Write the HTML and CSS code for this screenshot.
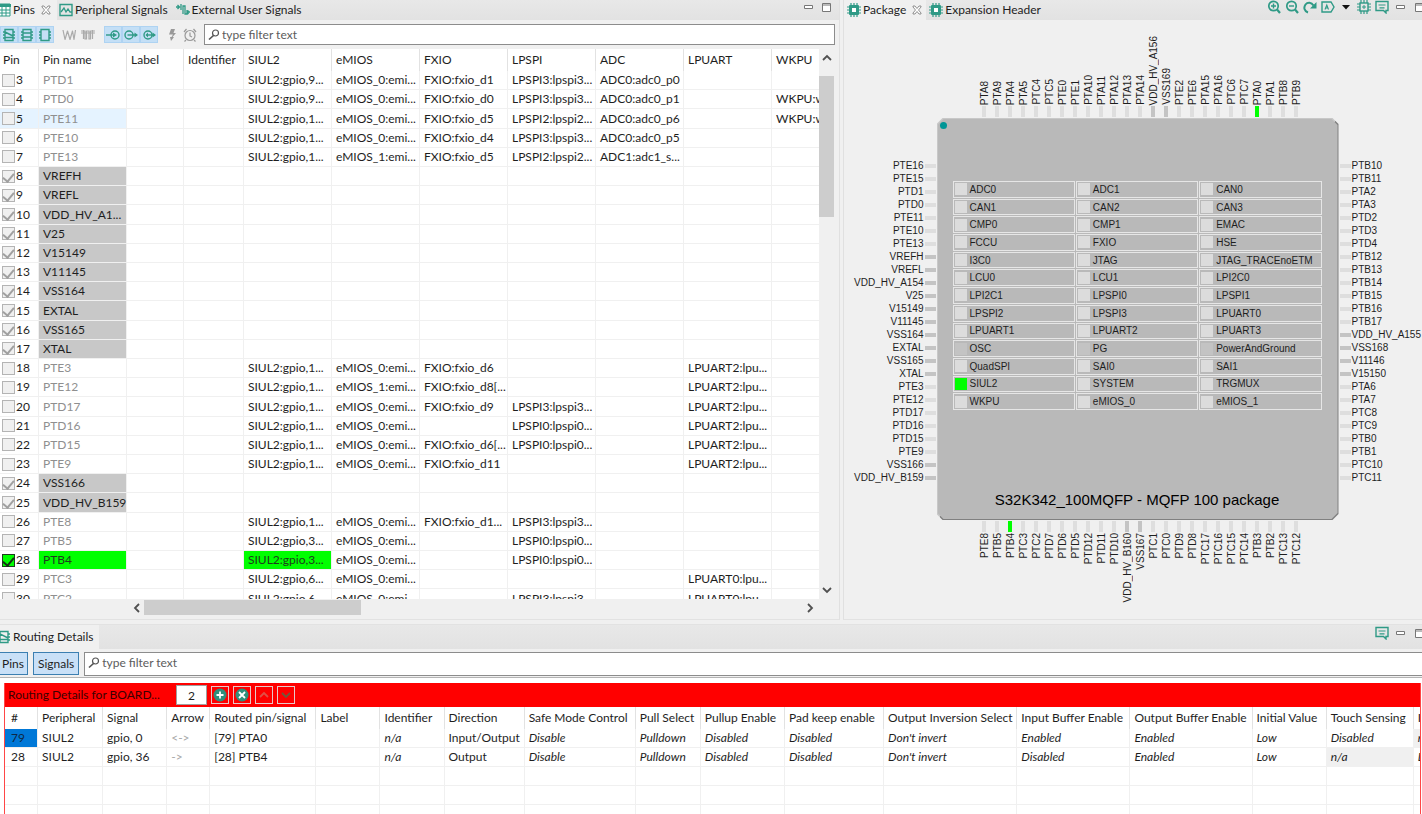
FILE: index.html
```html
<!DOCTYPE html>
<html lang="en">
<head>
    <meta charset="UTF-8">
    <meta name="viewport" content="width=device-width, initial-scale=1.0">
    <title>Pins Tool</title>
    <link rel="stylesheet" href="styles.css">
</head>
<body>
    <svg class="sprite" aria-hidden="true">
        <symbol id="i-table" viewBox="0 0 14 14"><path d="M1 1h12v12H1z" fill="#fff"/><path d="M0 1h14v3H0z" fill="#2f9a86"/><path d="M1 1h12v12H1zM1 7h12M1 10h12M5 3v10M9 3v10" fill="none" stroke="#2f9a86"/></symbol>
        <symbol id="i-wave" viewBox="0 0 14 14"><path d="M1 1.5h12v11H1z" fill="none" stroke="#2f9a86" stroke-width="1.4"/><path d="M2 9l3-4 2 4 2-3 2 3h2" fill="none" stroke="#2f9a86" stroke-width="1.3"/></symbol>
        <symbol id="i-ext" viewBox="0 0 14 14"><path d="M0 4h3.500M1.500 2l2 2-2 2M5 1v6M7 11V3h2v8h2V7M11 9h3M12.500 7.500L11 9l1.500 2" fill="none" stroke="#2f9a86" stroke-width="1.3"/></symbol>
        <symbol id="i-chip" viewBox="0 0 14 14"><path d="M4 0v14M7 0v14M10 0v14M0 4h14M0 7h14M0 10h14" stroke="#2f9a86" stroke-width="1.2"/><rect x="2" y="2" width="10" height="10" rx="1" fill="#2f9a86"/><rect x="5" y="5" width="4" height="4" fill="#fff"/></symbol>
        <symbol id="i-close" viewBox="0 0 10 10"><path d="M1 1h2l2 2.500L7 1h2v1L6.500 5 9 8v1H7L5 6.500 3 9H1V8l2.500-3L1 2z" fill="#fff" stroke="#777" stroke-width=".8"/></symbol>
        <symbol id="i-route" viewBox="0 0 14 14"><path d="M3 1.500h8v11H3zM1 4h2M1 7h2M1 10h2M11 4h2M11 7h2M11 10h2M3 4l8 4M3 9.500h8" fill="none" stroke="#2f9a86" stroke-width="1.400"/></symbol>
        <symbol id="i-rows" viewBox="0 0 14 14"><path d="M3 1.500h8v11H3zM1 4h2M1 7h2M1 10h2M11 4h2M11 7h2M11 10h2M3 5h8M3 9h8" fill="none" stroke="#2f9a86" stroke-width="1.400"/></symbol>
        <symbol id="i-box" viewBox="0 0 14 14"><path d="M3 1.500h8v11H3zM1 4h2M1 7h2M1 10h2M11 4h2M11 7h2M11 10h2" fill="none" stroke="#2f9a86" stroke-width="1.400"/></symbol>
        <symbol id="i-sine" viewBox="0 0 14 14"><path d="M1 2l2 9.500L5.500 3 8 11.500 10.500 3l1.500 8.500L13.500 2" fill="none" stroke="#aaa" stroke-width="1.200" stroke-linejoin="round"/></symbol>
        <symbol id="i-square" viewBox="0 0 14 14"><path d="M0 3h4v8h1.500V3H8v8h1.500V3H14M2.500 2v9M11.500 2v9M0 5h14" fill="none" stroke="#aaa" stroke-width="1.200"/></symbol>
        <symbol id="i-in" viewBox="0 0 14 14"><circle cx="9" cy="7" r="4" fill="none" stroke="#2f9a86" stroke-width="1.400"/><path d="M0 7h8" stroke="#2f9a86" stroke-width="1.400"/><path d="M7 4.500l4 2.500-4 2.500z" fill="#2f9a86"/></symbol>
        <symbol id="i-out" viewBox="0 0 14 14"><circle cx="5" cy="7" r="4" fill="none" stroke="#2f9a86" stroke-width="1.400"/><path d="M3.500 7h9" stroke="#2f9a86" stroke-width="1.400"/><path d="M10.500 4.500l3.500 2.500-3.500 2.500z" fill="#2f9a86"/></symbol>
        <symbol id="i-inout" viewBox="0 0 14 14"><circle cx="6" cy="7" r="4" fill="none" stroke="#2f9a86" stroke-width="1.400"/><path d="M4.500 7h8" stroke="#2f9a86" stroke-width="1.400"/><path d="M6 4.500L3.500 7 6 9.500zM10.500 4.500l3.500 2.500-3.500 2.500z" fill="#2f9a86"/></symbol>
        <symbol id="i-bolt" viewBox="0 0 14 14"><path d="M6 1h4L8.500 5H11l-3.500 4H9l-3 4-1-4h1.500L8 6.500H4z" fill="#999"/></symbol>
        <symbol id="i-clock" viewBox="0 0 14 14"><circle cx="7" cy="7.500" r="5" fill="none" stroke="#999" stroke-width="1.200"/><path d="M7 4.500v3.500l2 1M1 4l2.500-3M13 4l-2.500-3M3 12l-1.500 1.500M11 12l1.500 1.500" fill="none" stroke="#999" stroke-width="1.200"/></symbol>
        <symbol id="i-search" viewBox="0 0 12 12"><circle cx="7.500" cy="4" r="3" fill="none" stroke="#555" stroke-width="1.200"/><path d="M5.500 6.500L1 10.500" stroke="#555" stroke-width="1.600"/></symbol>
        <symbol id="i-min" viewBox="0 0 9 9"><path d="M.5 2.500h8v3h-8z" fill="#fff" stroke="#777"/></symbol>
        <symbol id="i-max" viewBox="0 0 9 9"><path d="M.5.5h8v8h-8z" fill="#fff" stroke="#777"/><path d="M0 2h9" stroke="#777"/></symbol>
        <symbol id="i-zin" viewBox="0 0 14 14"><circle cx="6.500" cy="6" r="4.700" fill="none" stroke="#2f9a86" stroke-width="1.700"/><path d="M10 9.500l3 3.500" stroke="#2f9a86" stroke-width="2.200"/><path d="M4 6h5M6.500 3.500v5" stroke="#2f9a86" stroke-width="1.400"/></symbol>
        <symbol id="i-zout" viewBox="0 0 14 14"><circle cx="6.500" cy="6" r="4.700" fill="none" stroke="#2f9a86" stroke-width="1.700"/><path d="M10 9.500l3 3.500" stroke="#2f9a86" stroke-width="2.200"/><path d="M4 6h5" stroke="#2f9a86" stroke-width="1.400"/></symbol>
        <symbol id="i-rotate" viewBox="0 0 14 14"><path d="M5 12.500C1 11 .5 7.500 2.500 4.500c2-2.500 6-2.500 8 1" fill="none" stroke="#2f9a86" stroke-width="2"/><path d="M13.500 2v6.500H7z" fill="#2f9a86"/></symbol>
        <symbol id="i-tag" viewBox="0 0 14 14"><path d="M1 2h9l3 5-3 5H1z" fill="none" stroke="#2f9a86" stroke-width="1.400"/><path d="M4 9.500L5.800 5l1.700 4.500M4.800 8h2.200" fill="none" stroke="#2f9a86" stroke-width="1.100"/></symbol>
        <symbol id="i-caret" viewBox="0 0 8 8"><path d="M0 2h8L4 6.500z" fill="#111"/></symbol>
        <symbol id="i-chip2" viewBox="0 0 14 14"><path d="M4 0v14M7 0v14M10 0v14M0 4h14M0 7h14M0 10h14" stroke="#2f9a86" stroke-width="1.200"/><rect x="3" y="3" width="8" height="8" fill="#e6e6e6" stroke="#2f9a86" stroke-width="1.400"/><path d="M7 5v4M5 7h4" stroke="#2f9a86"/></symbol>
        <symbol id="i-note" viewBox="0 0 14 14"><path d="M1 1.500h12v9h-2v2.500l-2.500-2.500H1z" fill="none" stroke="#2f9a86" stroke-width="1.400"/><path d="M3.500 5h7M4.500 7.800h5" stroke="#2f9a86" stroke-width="1.200"/></symbol>
        <symbol id="i-add" viewBox="0 0 14 14"><circle cx="7" cy="7" r="6.500" fill="#2f8f7c"/><path d="M7 3.500v7M3.500 7h7" stroke="#fff" stroke-width="1.800"/></symbol>
        <symbol id="i-del" viewBox="0 0 14 14"><circle cx="7" cy="7" r="6.500" fill="#2f8f7c"/><path d="M4 4l6 6M10 4l-6 6" stroke="#fff" stroke-width="1.800"/></symbol>
        <symbol id="i-up" viewBox="0 0 10 10"><path d="M1 7l4-4 4 4" fill="none" stroke="currentColor" stroke-width="1.800"/></symbol>
        <symbol id="i-down" viewBox="0 0 10 10"><path d="M1 3l4 4 4-4" fill="none" stroke="currentColor" stroke-width="1.800"/></symbol>
        <symbol id="i-left" viewBox="0 0 10 10"><path d="M7 1L3 5l4 4" fill="none" stroke="currentColor" stroke-width="1.800"/></symbol>
        <symbol id="i-right" viewBox="0 0 10 10"><path d="M3 1l4 4-4 4" fill="none" stroke="currentColor" stroke-width="1.800"/></symbol>
    </svg>

    <div class="workbench">
        <section class="view pins-view">
            <div class="tabs">
                <button class="tab active"><svg class="icon"><use href="#i-table"/></svg>Pins<svg class="close"><use href="#i-close"/></svg></button>
                <button class="tab"><svg class="icon"><use href="#i-wave"/></svg>Peripheral Signals</button>
                <button class="tab"><svg class="icon"><use href="#i-ext"/></svg>External User Signals</button>
                <div class="tab-tools">
                    <button class="tool" aria-label="Minimize"><svg class="small"><use href="#i-min"/></svg></button>
                    <button class="tool" aria-label="Maximize"><svg class="small"><use href="#i-max"/></svg></button>
                </div>
            </div>
            <div class="toolbar">
                <div class="group">
                    <button class="toggle" aria-label="Routed pins"><svg class="icon"><use href="#i-route"/></svg></button>
                    <button class="toggle" aria-label="All pins"><svg class="icon"><use href="#i-rows"/></svg></button>
                    <button class="toggle" aria-label="Dedicated pins"><svg class="icon"><use href="#i-box"/></svg></button>
                </div>
                <div class="group plain">
                    <button class="toggle" aria-label="Analog"><svg class="icon"><use href="#i-sine"/></svg></button>
                    <button class="toggle" aria-label="Digital"><svg class="icon"><use href="#i-square"/></svg></button>
                </div>
                <div class="group">
                    <button class="toggle" aria-label="Input"><svg class="icon"><use href="#i-in"/></svg></button>
                    <button class="toggle" aria-label="Output"><svg class="icon"><use href="#i-out"/></svg></button>
                    <button class="toggle" aria-label="Input/Output"><svg class="icon"><use href="#i-inout"/></svg></button>
                </div>
                <div class="group plain">
                    <button class="toggle" aria-label="Power"><svg class="icon"><use href="#i-bolt"/></svg></button>
                    <button class="toggle" aria-label="Clock"><svg class="icon"><use href="#i-clock"/></svg></button>
                </div>
                <div class="filter">
                    <svg class="search"><use href="#i-search"/></svg>
                    <input type="text" placeholder="type filter text" aria-label="Filter pins">
                </div>
            </div>
            <div class="table-area">
                <div class="table-clip">
                    <table class="pins">
                        <colgroup>
                            <col class="c-pin"><col class="c-sig"><col class="c-label"><col class="c-ident">
                            <col class="c-sig"><col class="c-sig"><col class="c-sig"><col class="c-sig"><col class="c-sig"><col class="c-sig"><col class="c-sig">
                        </colgroup>
                        <thead>
                            <tr><th>Pin</th><th>Pin name</th><th>Label</th><th>Identifier</th><th>SIUL2</th><th>eMIOS</th><th>FXIO</th><th>LPSPI</th><th>ADC</th><th>LPUART</th><th>WKPU</th></tr>
                        </thead>
                        <tbody id="pinRows"></tbody>
                    </table>
                </div>
                <div class="vscroll">
                    <button class="arrow" aria-label="Scroll up"><svg class="chev"><use href="#i-up"/></svg></button>
                    <div class="track"><div class="thumb"></div></div>
                    <button class="arrow" aria-label="Scroll down"><svg class="chev"><use href="#i-down"/></svg></button>
                </div>
            </div>
            <div class="hscroll">
                <button class="arrow" aria-label="Scroll left"><svg class="chev"><use href="#i-left"/></svg></button>
                <div class="track"><div class="thumb"></div></div>
                <button class="arrow" aria-label="Scroll right"><svg class="chev"><use href="#i-right"/></svg></button>
            </div>
        </section>

        <section class="view package-view">
            <div class="tabs">
                <button class="tab active"><svg class="icon"><use href="#i-chip"/></svg>Package<svg class="close"><use href="#i-close"/></svg></button>
                <button class="tab"><svg class="icon"><use href="#i-chip"/></svg>Expansion Header</button>
                <div class="tab-tools cut">
                    <button class="tool" aria-label="Zoom in"><svg class="icon"><use href="#i-zin"/></svg></button>
                    <button class="tool" aria-label="Zoom out"><svg class="icon"><use href="#i-zout"/></svg></button>
                    <button class="tool" aria-label="Rotate"><svg class="icon"><use href="#i-rotate"/></svg></button>
                    <button class="tool" aria-label="Labels"><svg class="icon"><use href="#i-tag"/></svg></button>
                    <button class="tool" aria-label="Label menu"><svg class="caret"><use href="#i-caret"/></svg></button>
                    <button class="tool" aria-label="Resources"><svg class="icon"><use href="#i-chip2"/></svg></button>
                    <button class="tool" aria-label="Legend"><svg class="icon"><use href="#i-note"/></svg></button>
                    <button class="tool wide" aria-label="Minimize"><svg class="small"><use href="#i-min"/></svg></button>
                    <button class="tool wide" aria-label="Maximize"><svg class="small"><use href="#i-max"/></svg></button>
                </div>
            </div>
            <div class="package">
                <ul class="side top" id="topPins"></ul>
                <ul class="side left" id="leftPins"></ul>
                <div class="chip">
                    <div class="chip-body">
                        <span class="pin-one"></span>
                        <div class="modules" id="modules"></div>
                        <p class="chip-name">S32K342_100MQFP - MQFP 100 package</p>
                    </div>
                </div>
                <ul class="side right" id="rightPins"></ul>
                <ul class="side bottom" id="bottomPins"></ul>
            </div>
        </section>

        <section class="view routing-view">
            <div class="tabs">
                <button class="tab active"><svg class="icon"><use href="#i-route"/></svg>Routing Details</button>
                <div class="tab-tools cut">
                    <button class="tool" aria-label="Legend"><svg class="icon"><use href="#i-note"/></svg></button>
                    <button class="tool wide" aria-label="Minimize"><svg class="small"><use href="#i-min"/></svg></button>
                    <button class="tool wide" aria-label="Maximize"><svg class="small"><use href="#i-max"/></svg></button>
                </div>
            </div>
            <div class="routing-bar">
                <button class="push">Pins</button>
                <button class="push">Signals</button>
                <div class="filter">
                    <svg class="search"><use href="#i-search"/></svg>
                    <input type="text" placeholder="type filter text" aria-label="Filter routing">
                </div>
            </div>
            <div class="routing-body">
                <div class="routing-frame">
                    <div class="routing-head">
                        <label for="rowCount">Routing Details for BOARD...</label>
                        <input id="rowCount" type="text" value="2">
                        <button aria-label="Add"><svg class="icon"><use href="#i-add"/></svg></button>
                        <button aria-label="Remove"><svg class="icon"><use href="#i-del"/></svg></button>
                        <button class="dim" aria-label="Move up"><svg class="chev"><use href="#i-up"/></svg></button>
                        <button class="go" aria-label="Move down"><svg class="chev"><use href="#i-down"/></svg></button>
                    </div>
                    <table class="routing">
                        <colgroup>
                            <col class="w33"><col class="w65"><col class="w64"><col class="w43"><col class="w106"><col class="w64"><col class="w64"><col class="w80"><col class="w111"><col class="w65"><col class="w84"><col class="w99"><col class="w133"><col class="w113"><col class="w122"><col class="w74"><col class="w87"><col class="w43">
                        </colgroup>
                        <thead>
                            <tr><th>#</th><th>Peripheral</th><th>Signal</th><th>Arrow</th><th>Routed pin/signal</th><th>Label</th><th>Identifier</th><th>Direction</th><th>Safe Mode Control</th><th>Pull Select</th><th>Pullup Enable</th><th>Pad keep enable</th><th>Output Inversion Select</th><th>Input Buffer Enable</th><th>Output Buffer Enable</th><th>Initial Value</th><th>Touch Sensing</th><th>I</th></tr>
                        </thead>
                        <tbody>
                            <tr><td class="selected">79</td><td>SIUL2</td><td>gpio, 0</td><td class="arrow-cell">&lt;-&gt;</td><td>[79] PTA0</td><td></td><td class="def">n/a</td><td>Input/Output</td><td class="def">Disable</td><td class="def">Pulldown</td><td class="def">Disabled</td><td class="def">Disabled</td><td class="def">Don't invert</td><td class="def">Enabled</td><td class="def">Enabled</td><td class="def">Low</td><td class="def">Disabled</td><td class="def na">n</td></tr>
                            <tr><td>28</td><td>SIUL2</td><td>gpio, 36</td><td class="arrow-cell">-&gt;</td><td>[28] PTB4</td><td></td><td class="def">n/a</td><td>Output</td><td class="def">Disable</td><td class="def">Pulldown</td><td class="def">Disabled</td><td class="def">Disabled</td><td class="def">Don't invert</td><td class="def">Disabled</td><td class="def">Enabled</td><td class="def">Low</td><td class="def na">n/a</td><td class="def">D</td></tr>
                            <tr><td></td><td></td><td></td><td></td><td></td><td></td><td></td><td></td><td></td><td></td><td></td><td></td><td></td><td></td><td></td><td></td><td></td><td></td></tr>
                            <tr><td></td><td></td><td></td><td></td><td></td><td></td><td></td><td></td><td></td><td></td><td></td><td></td><td></td><td></td><td></td><td></td><td></td><td></td></tr>
                            <tr><td></td><td></td><td></td><td></td><td></td><td></td><td></td><td></td><td></td><td></td><td></td><td></td><td></td><td></td><td></td><td></td><td></td><td></td></tr>
                        </tbody>
                    </table>
                </div>
            </div>
        </section>
    </div>

    <script src="script.js"></script>
</body>
</html>
```
FILE: styles.css
```css
/* styles.css */
* {
    box-sizing: border-box;
}

body {
    margin: 0;
    height: 100vh;
    overflow: hidden;
    background-color: #f0f0f0;
    color: #1e1e1e;
    font: 12px/18px Lato, "Open Sans", sans-serif;
}

button,
input {
    margin: 0;
    padding: 0;
    border: none;
    background: none;
    color: inherit;
    font: inherit;
}

.sprite {
    display: none;
}

svg {
    flex: none;
}

.icon {
    width: 14px;
    height: 14px;
}

.small {
    width: 9px;
    height: 9px;
}

.caret {
    width: 8px;
    height: 8px;
}

.close,
.chev {
    width: 10px;
    height: 10px;
}

.search {
    width: 12px;
    height: 12px;
}

.workbench {
    display: grid;
    grid-template-columns: minmax(0, 840fr) minmax(0, 579fr);
    grid-template-rows: minmax(0, 1fr) 190px;
    column-gap: 3px;
    row-gap: 4px;
    height: 100vh;
}

.view {
    display: flex;
    flex-direction: column;
    min-height: 0;
    overflow: hidden;
}

.pins-view,
.package-view {
    border-bottom: 1px solid #e2e2e2;
}

.pins-view {
    border-right: 1px solid #e0e0e0;
}

.package-view {
    border-left: 1px solid #e0e0e0;
}

.routing-view {
    grid-column: 1 / 3;
    border-top: 1px solid #e2e2e2;
}

/* tabs */
.tabs {
    display: flex;
    flex: none;
    height: 20px;
    background: linear-gradient(#e8e8e8, #e2e2e2);
}

.tab {
    display: flex;
    align-items: center;
    gap: 2px;
    padding: 0 4px 0 3px;
    white-space: nowrap;
}

.tab.active {
    background-color: #f0f0f0;
}

.close {
    margin-left: 4px;
}

.pins-view .tab {
    padding: 0 6px 0 2px;
}

.pins-view .tab:first-child {
    padding: 0 6px 0 0;
    margin-left: -3px;
}

.tab-tools {
    display: flex;
    align-items: flex-start;
    margin-left: auto;
    padding-right: 4px;
}

.tab-tools.cut {
    margin-right: -7px;
    padding-right: 0;
}

.tool {
    display: flex;
    justify-content: center;
    align-items: center;
    width: 18px;
    height: 14px;
}

.tool.wide {
    width: 19px;
}

/* pins toolbar */
.toolbar {
    display: flex;
    align-items: center;
    gap: 5px;
    flex: none;
    height: 29px;
    padding-right: 4px;
}

.group {
    display: flex;
    background-color: #c4dff6;
}

.group.plain {
    background: none;
}

.toggle {
    display: flex;
    justify-content: center;
    align-items: center;
    width: 18px;
    height: 17px;
    border: 1px solid #aed3f2;
}

.plain .toggle {
    border-color: transparent;
}

.group.plain:nth-child(2) {
    gap: 1px;
    padding: 0 2px 0 1px;
}

.filter {
    display: flex;
    align-items: center;
    flex: 1;
    gap: 2px;
    height: 21px;
    padding-left: 3px;
    border: 1px solid #8c8c8c;
    background-color: #fff;
}

.filter input {
    flex: 1;
    min-width: 0;
    outline: none;
}

.filter input::placeholder {
    color: #5c5c5c;
}

/* tables */
table {
    border-collapse: separate;
    border-spacing: 0;
    table-layout: fixed;
    background-color: #fff;
}

th,
td {
    height: 19px;
    padding: 0 0 0 4px;
    border-right: 1px solid #f0f0f0;
    border-bottom: 1px solid #f0f0f0;
    font-weight: normal;
    line-height: 18px;
    text-align: left;
    white-space: nowrap;
}

th {
    height: 22px;
    border-right-color: #e2e2e2;
    border-bottom: none;
}

.table-area {
    display: flex;
    flex: 1;
    min-height: 0;
    padding-right: 5px;
}

.table-clip {
    flex: 1;
    min-width: 0;
    overflow: hidden;
    background-color: #fff;
}

.pins {
    width: 860px;
    height: 560px;
}

.c-pin {
    width: 39px;
}

.c-sig {
    width: 88px;
}

.c-label {
    width: 57px;
}

.c-ident {
    width: 60px;
}

.pins th:first-child {
    padding-left: 3px;
}

.pins td:first-child {
    padding-left: 2px;
}

.pins .name {
    color: #8f8f8f;
}

.pins .fixed .name {
    background-color: #c8c8c8;
    color: #1e1e1e;
}

.pins .hover td:nth-child(-n+2) {
    background-color: #e5f3ff;
}

.pins .routed .name,
.pins .routed td:nth-child(5) {
    background-color: #00ff00;
    color: #1e3c1e;
}

.pin-check {
    display: flex;
    align-items: center;
    gap: 1px;
}

.pin-check input {
    appearance: none;
    display: flex;
    justify-content: center;
    width: 13px;
    height: 13px;
    border: 1px solid #b4b4b4;
    background-color: #f0f0f0;
}

.pin-check input:checked::after {
    content: "";
    width: 5px;
    height: 9px;
    margin-bottom: 3px;
    border: solid #a0a0a0;
    border-width: 0 2px 2px 0;
    transform: rotate(40deg);
}

.routed .pin-check input {
    border-color: #1e3c1e;
    background-color: #00ff00;
}

.routed .pin-check input:checked::after {
    border-color: #143214;
}

/* scroll bars */
.vscroll,
.hscroll {
    display: flex;
    flex: none;
    color: #505050;
}

.vscroll {
    flex-direction: column;
    width: 15px;
}

.hscroll {
    height: 20px;
    padding: 1px 22px 4px 129px;
}

.arrow {
    display: flex;
    justify-content: center;
    align-items: center;
}

.vscroll .arrow {
    height: 18px;
}

.hscroll .arrow {
    width: 15px;
}

.track {
    flex: 1;
}

.vscroll .track {
    padding-top: 9px;
}

.thumb {
    background-color: #cdcdcd;
}

.vscroll .thumb {
    height: 28%;
}

.hscroll .thumb {
    width: 33%;
    height: 15px;
}

/* package drawing */
.package {
    display: grid;
    grid-template-columns: minmax(0, 1fr) auto minmax(0, 1fr);
    grid-template-rows: minmax(0, 1fr) auto minmax(0, 1fr);
    grid-template-areas:
        ". top ."
        "left chip right"
        ". bottom .";
    flex: 1;
    min-height: 0;
    padding: 0 0 1px 9px;
    color: #1e1e1e;
    font: 10px/13px "Liberation Sans", Arial, sans-serif;
}

.side {
    display: flex;
    margin: 0;
    padding: 0;
    list-style: none;
}

.side li {
    display: flex;
    align-items: center;
    white-space: nowrap;
}

.side li::after {
    content: "";
    flex: none;
    width: 11px;
    height: 4px;
    margin: 0 1px;
    background-color: #dedede;
}

.side .power::after {
    background-color: #c4c4c4;
}

.side .used::after {
    background-color: #00ff00;
}

.left,
.right {
    flex-direction: column;
    padding-top: 41px;
}

.left {
    grid-area: left;
}

.right {
    grid-area: right;
}

.side.left li {
    justify-content: flex-end;
}

.side.right li {
    flex-direction: row-reverse;
    justify-content: flex-end;
}

.top,
.bottom {
    padding-left: 41px;
}

.top {
    grid-area: top;
    align-items: flex-end;
}

.bottom {
    grid-area: bottom;
    align-items: flex-start;
}

.side.top li,
.side.bottom li {
    width: 13px;
    writing-mode: vertical-rl;
}

.side.bottom li {
    flex-direction: row-reverse;
}

.side.top li::after,
.side.bottom li::after {
    width: 4px;
    height: 11px;
    margin: 1px 0;
}

.top span,
.bottom span {
    transform: rotate(180deg);
}

.chip,
.chip-body {
    clip-path: polygon(6px 0, calc(100% - 6px) 0, 100% 6px, 100% calc(100% - 6px), calc(100% - 6px) 100%, 6px 100%, 0 calc(100% - 6px), 0 6px);
}

.chip {
    grid-area: chip;
    padding: 1px;
    background: linear-gradient(135deg, #c8c8c8 50%, #808080 50%);
}

.chip-body {
    display: flex;
    flex-direction: column;
    width: 400px;
    height: 400px;
    padding: 3px 16px 10px 15px;
    background-color: #b9b9b9;
}

.pin-one {
    width: 7px;
    height: 7px;
    margin-left: -13px;
    border-radius: 50%;
    background-color: #009696;
}

.modules {
    display: grid;
    grid-template-columns: repeat(3, 1fr);
    grid-auto-rows: 1fr;
    gap: 1px;
    height: 229px;
    margin-top: 52px;
}

.modules label {
    display: flex;
    align-items: center;
    gap: 3px;
    padding-left: 1px;
    border: 1px solid #e6e6e6;
}

.modules input {
    appearance: none;
    width: 12px;
    height: 12px;
    background-color: #dcdcdc;
}

.modules input:disabled {
    background-color: #c3c3c3;
}

.modules input:checked {
    background-color: #00ff00;
}

.chip-name {
    margin: auto 0 0;
    color: #000;
    font-size: 15px;
    line-height: 18px;
    text-align: center;
}

/* routing details */
.routing-view .tabs {
    height: 24px;
}

.routing-view .tab {
    padding: 0 5px 0 0;
    margin-left: -3px;
}

.routing-view .tab-tools {
    padding-top: 1px;
}

.routing-bar {
    display: flex;
    flex: none;
    gap: 5px;
    height: 29px;
    padding: 3px 0 2px;
    border-bottom: 1px solid #b4b4b4;
}

.routing-bar .filter {
    height: 24px;
    margin-right: -2px;
    padding-bottom: 2px;
}

.push {
    height: 23px;
    padding: 0 4px;
    border: 1px solid #3c7fb1;
    background-color: #c9e0f7;
}

.push:first-child {
    padding: 0 3px 0 2px;
    border-left: none;
}

.routing-body {
    flex: 1;
    min-height: 0;
    padding: 5px 1px 0 4px;
    background-color: #fff;
}

.routing-frame {
    height: 100%;
    overflow: hidden;
    border: solid #ff4646;
    border-width: 0 1px;
}

.routing-head {
    display: flex;
    align-items: center;
    gap: 4px;
    height: 24px;
    padding-left: 3px;
    background-color: #ff0000;
    color: #3c0000;
}

.routing-head label {
    width: 164px;
    white-space: nowrap;
}

.routing-head input {
    width: 31px;
    height: 20px;
    border: 1px solid #a0a0a0;
    background-color: #fff;
    color: #1e1e1e;
    text-align: center;
}

.routing-head button {
    display: flex;
    justify-content: center;
    align-items: center;
    width: 18px;
    height: 18px;
    border: 1px solid #e6c8c8;
}

.routing-head .dim {
    color: #e05046;
}

.routing-head .go {
    color: #6e5a3c;
}

.routing {
    width: 1452px;
}

.routing th:first-child,
.routing td:first-child {
    padding-left: 6px;
}

.routing td.selected {
    background-color: #0078d7;
    color: #0f2846;
}

.routing td.arrow-cell {
    color: #a8a8a8;
}

.routing td.def {
    font-style: italic;
}

.routing td.na {
    background-color: #f0f0f0;
}

.w33 { width: 33px; }
.w43 { width: 43px; }
.w64 { width: 64px; }
.w65 { width: 65px; }
.w74 { width: 74px; }
.w80 { width: 80px; }
.w84 { width: 84px; }
.w87 { width: 87px; }
.w99 { width: 99px; }
.w106 { width: 106px; }
.w111 { width: 111px; }
.w113 { width: 113px; }
.w122 { width: 122px; }
.w133 { width: 133px; }
```
FILE: script.js
```js
// pin, name, SIUL2, eMIOS, FXIO, LPSPI, ADC, LPUART, WKPU
const pins = [
    [3, 'PTD1', 'SIUL2:gpio,9...', 'eMIOS_0:emi...', 'FXIO:fxio_d1', 'LPSPI3:lpspi3...', 'ADC0:adc0_p0'],
    [4, 'PTD0', 'SIUL2:gpio,9...', 'eMIOS_0:emi...', 'FXIO:fxio_d0', 'LPSPI3:lpspi3...', 'ADC0:adc0_p1', '', 'WKPU:wkpu'],
    [5, 'PTE11', 'SIUL2:gpio,1...', 'eMIOS_0:emi...', 'FXIO:fxio_d5', 'LPSPI2:lpspi2...', 'ADC0:adc0_p6', '', 'WKPU:wkpu'],
    [6, 'PTE10', 'SIUL2:gpio,1...', 'eMIOS_0:emi...', 'FXIO:fxio_d4', 'LPSPI3:lpspi3...', 'ADC0:adc0_p5'],
    [7, 'PTE13', 'SIUL2:gpio,1...', 'eMIOS_1:emi...', 'FXIO:fxio_d5', 'LPSPI2:lpspi2...', 'ADC1:adc1_s...'],
    [8, 'VREFH'],
    [9, 'VREFL'],
    [10, 'VDD_HV_A1...'],
    [11, 'V25'],
    [12, 'V15149'],
    [13, 'V11145'],
    [14, 'VSS164'],
    [15, 'EXTAL'],
    [16, 'VSS165'],
    [17, 'XTAL'],
    [18, 'PTE3', 'SIUL2:gpio,1...', 'eMIOS_0:emi...', 'FXIO:fxio_d6', '', '', 'LPUART2:lpu...'],
    [19, 'PTE12', 'SIUL2:gpio,1...', 'eMIOS_1:emi...', 'FXIO:fxio_d8[...', '', '', 'LPUART2:lpu...'],
    [20, 'PTD17', 'SIUL2:gpio,1...', 'eMIOS_0:emi...', 'FXIO:fxio_d9', 'LPSPI3:lpspi3...', '', 'LPUART2:lpu...'],
    [21, 'PTD16', 'SIUL2:gpio,1...', 'eMIOS_0:emi...', '', 'LPSPI0:lpspi0...', '', 'LPUART2:lpu...'],
    [22, 'PTD15', 'SIUL2:gpio,1...', 'eMIOS_0:emi...', 'FXIO:fxio_d6[...', 'LPSPI0:lpspi0...', '', 'LPUART2:lpu...'],
    [23, 'PTE9', 'SIUL2:gpio,1...', 'eMIOS_0:emi...', 'FXIO:fxio_d11', '', '', 'LPUART2:lpu...'],
    [24, 'VSS166'],
    [25, 'VDD_HV_B159'],
    [26, 'PTE8', 'SIUL2:gpio,1...', 'eMIOS_0:emi...', 'FXIO:fxio_d1...', 'LPSPI3:lpspi3...'],
    [27, 'PTB5', 'SIUL2:gpio,3...', 'eMIOS_0:emi...', '', 'LPSPI0:lpspi0...'],
    [28, 'PTB4', 'SIUL2:gpio,3...', 'eMIOS_0:emi...', '', 'LPSPI0:lpspi0...'],
    [29, 'PTC3', 'SIUL2:gpio,6...', 'eMIOS_0:emi...', '', '', '', 'LPUART0:lpu...'],
    [30, 'PTC2', 'SIUL2:gpio,6...', 'eMIOS_0:emi...', '', 'LPSPI3:lpspi3...', '', 'LPUART0:lpu...']
];

const sides = {
    topPins: 'PTA8 PTA9 PTA4 PTA5 PTC4 PTC5 PTE0 PTE1 PTA10 PTA11 PTA12 PTA13 PTA14 VDD_HV_A156 VSS169 PTE2 PTE6 PTA15 PTA16 PTC6 PTC7 PTA0 PTA1 PTB8 PTB9',
    leftPins: 'PTE16 PTE15 PTD1 PTD0 PTE11 PTE10 PTE13 VREFH VREFL VDD_HV_A154 V25 V15149 V11145 VSS164 EXTAL VSS165 XTAL PTE3 PTE12 PTD17 PTD16 PTD15 PTE9 VSS166 VDD_HV_B159',
    rightPins: 'PTB10 PTB11 PTA2 PTA3 PTD2 PTD3 PTD4 PTB12 PTB13 PTB14 PTB15 PTB16 PTB17 VDD_HV_A155 VSS168 V11146 V15150 PTA6 PTA7 PTC8 PTC9 PTB0 PTB1 PTC10 PTC11',
    bottomPins: 'PTE8 PTB5 PTB4 PTC3 PTC2 PTD7 PTD6 PTD5 PTD12 PTD11 PTD10 VDD_HV_B160 VSS167 PTC1 PTC0 PTD9 PTD8 PTC17 PTC16 PTC15 PTC14 PTB3 PTB2 PTC13 PTC12'
};

const modules = 'ADC0 ADC1 CAN0 CAN1 CAN2 CAN3 CMP0 CMP1 EMAC FCCU FXIO HSE I3C0 JTAG JTAG_TRACEnoETM LCU0 LCU1 LPI2C0 LPI2C1 LPSPI0 LPSPI1 LPSPI2 LPSPI3 LPUART0 LPUART1 LPUART2 LPUART3 OSC PG PowerAndGround QuadSPI SAI0 SAI1 SIUL2 SYSTEM TRGMUX WKPU eMIOS_0 eMIOS_1';

const routed = ['PTB4', 'PTA0'];
const noRouting = ['OSC', 'PG', 'PowerAndGround'];

document.getElementById('pinRows').innerHTML = pins.map(function(pin) {
    const [number, name, ...signals] = pin;
    const fixed = signals.length === 0;
    const isRouted = routed.includes(name);
    const rowClass = fixed ? 'fixed' : isRouted ? 'routed' : number === 5 ? 'hover' : '';
    const checked = fixed || isRouted ? ' checked' : '';

    let cells = `<td><label class="pin-check"><input type="checkbox"${checked}>${number}</label></td>`;
    cells += `<td class="name">${name}</td><td></td><td></td>`;
    for (let i = 0; i < 7; i++) {
        cells += `<td>${signals[i] || ''}</td>`;
    }
    return `<tr class="${rowClass}">${cells}</tr>`;
}).join('');

Object.keys(sides).forEach(function(id) {
    document.getElementById(id).innerHTML = sides[id].split(' ').map(function(name) {
        const type = routed.includes(name) ? 'used' : name.startsWith('PT') ? '' : 'power';
        return `<li class="${type}"><span>${name}</span></li>`;
    }).join('');
});

document.getElementById('modules').innerHTML = modules.split(' ').map(function(name) {
    const state = name === 'SIUL2' ? ' checked' : noRouting.includes(name) ? ' disabled' : '';
    return `<label><input type="checkbox"${state}>${name}</label>`;
}).join('');
```
